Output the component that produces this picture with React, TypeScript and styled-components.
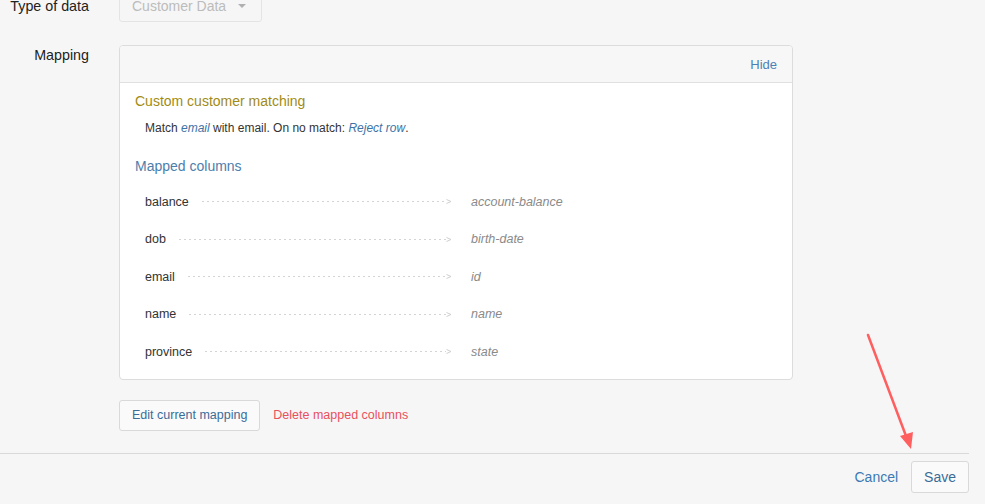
import React from "react";
import styled, { createGlobalStyle } from "styled-components";

const GlobalStyle = createGlobalStyle`
  html, body {
    margin: 0;
    padding: 0;
    background: #f6f6f6;
  }
  body {
    font-family: "Liberation Sans", Arial, sans-serif;
    color: #222;
  }
`;

const Page = styled.div`
  position: relative;
  height: 504px;
  overflow: hidden;
  padding-right: 16px;
`;

const Form = styled.div`
  display: grid;
  row-gap: 23px;
  margin-top: -10px;
`;

const FieldRow = styled.div<{ $center?: boolean }>`
  display: grid;
  grid-template-columns: 89px 674px;
  column-gap: 30px;
  align-items: ${(p) => (p.$center ? "center" : "start")};
`;

const Label = styled.div`
  text-align: right;
  font-size: 14.3px;
  line-height: 20px;
  color: #222;
`;

const Select = styled.div`
  box-sizing: border-box;
  width: 143px;
  height: 32px;
  display: flex;
  align-items: center;
  justify-content: space-between;
  padding: 0 15px 0 12px;
  border: 1px solid #e4e4e4;
  border-radius: 3px;
  font-size: 14px;
  color: #bcbcbc;
`;

const Caret = styled.span`
  width: 0;
  height: 0;
  border-left: 4px solid transparent;
  border-right: 4px solid transparent;
  border-top: 4px solid #b0b0b0;
`;

const Field = styled.div`
  display: flex;
  flex-direction: column;
`;

const Panel = styled.div`
  background: #fff;
  border: 1px solid #dcdcdc;
  border-radius: 4px;
  overflow: hidden;
`;

const PanelHeader = styled.div`
  height: 36px;
  display: flex;
  align-items: center;
  justify-content: flex-end;
  padding-right: 15px;
  background: #f7f7f7;
  border-bottom: 1px solid #e0e0e0;
`;

const LinkText = styled.span<{ $size?: number; $color?: string }>`
  font-size: ${(p) => p.$size ?? 14}px;
  color: ${(p) => p.$color ?? "#3f7ab2"};
  cursor: pointer;
`;

const PanelBody = styled.div`
  padding: 8px 0 8px 0;
`;

const SectionTitle = styled.div<{ $color: string; $gap?: number }>`
  font-size: 14px;
  line-height: 20px;
  padding-left: 15px;
  margin-top: ${(p) => p.$gap ?? 0}px;
  color: ${(p) => p.$color};
`;

const MatchLine = styled.div`
  font-size: 12px;
  line-height: 18px;
  margin-top: 8px;
  padding-left: 25px;
  color: #333;
`;

const Em = styled.em`
  color: #3d72a6;
`;

const ColumnList = styled.div`
  margin-top: 7px;
`;

const ColumnRow = styled.div`
  height: 37.5px;
  display: flex;
  align-items: center;
  padding-left: 25px;
  font-size: 12.5px;
`;

const Source = styled.div`
  width: 307px;
  display: flex;
  align-items: center;
  color: #333;
`;

const Leader = styled.div`
  flex: 1;
  margin-left: 13px;
  display: flex;
  align-items: center;
`;

const Dots = styled.span`
  flex: 1;
  height: 1px;
  background-image: repeating-linear-gradient(
    to right,
    #d4d4d4 0,
    #d4d4d4 2px,
    transparent 2px,
    transparent 5px
  );
`;

const Target = styled.div`
  margin-left: 19px;
  font-style: italic;
  color: #8a8a8a;
`;

const Actions = styled.div`
  display: flex;
  align-items: center;
  gap: 13px;
  margin-top: 20px;
`;

const Button = styled.button<{ $size?: number; $h: number }>`
  box-sizing: border-box;
  height: ${(p) => p.$h}px;
  padding: 0 12px;
  background: #fafafa;
  border: 1px solid #d9d9d9;
  border-radius: 3px;
  font-family: inherit;
  font-size: ${(p) => p.$size ?? 14}px;
  color: #3a6c98;
  cursor: pointer;
`;

const Footer = styled.div`
  margin-top: 22px;
  border-top: 1px solid #d9d9d9;
  padding-top: 7px;
  display: flex;
  justify-content: flex-end;
  align-items: center;
  gap: 13px;
`;

const Pointer = styled.svg`
  position: absolute;
  left: 860px;
  top: 328px;
  pointer-events: none;
`;

const columns: [string, string][] = [
  ["balance", "account-balance"],
  ["dob", "birth-date"],
  ["email", "id"],
  ["name", "name"],
  ["province", "state"],
];

const Chevron = () => (
  <svg width="6" height="5" viewBox="0 0 6 5">
    <path d="M0.5 0.5 L5 2.5 L0.5 4.5" fill="none" stroke="#cfcfcf" strokeWidth="1" />
  </svg>
);

export default function App() {
  return (
    <>
      <GlobalStyle />
      <Page>
        <Form>
          <FieldRow $center>
            <Label>Type of data</Label>
            <Select>
              <span>Customer Data</span>
              <Caret />
            </Select>
          </FieldRow>
          <FieldRow>
            <Label>Mapping</Label>
            <Field>
              <Panel>
                <PanelHeader>
                  <LinkText $size={13} $color="#4a82b6">Hide</LinkText>
                </PanelHeader>
                <PanelBody>
                  <SectionTitle $color="#a18b14">Custom customer matching</SectionTitle>
                  <MatchLine>
                    Match <Em>email</Em> with email. On no match: <Em>Reject row</Em>.
                  </MatchLine>
                  <SectionTitle $color="#4d7eab" $gap={19}>Mapped columns</SectionTitle>
                  <ColumnList>
                    {columns.map(([src, dst]) => (
                      <ColumnRow key={src}>
                        <Source>
                          {src}
                          <Leader>
                            <Dots />
                            <Chevron />
                          </Leader>
                        </Source>
                        <Target>{dst}</Target>
                      </ColumnRow>
                    ))}
                  </ColumnList>
                </PanelBody>
              </Panel>
              <Actions>
                <Button $h={31} $size={12.5}>Edit current mapping</Button>
                <LinkText $size={12.5} $color="#e9505d">Delete mapped columns</LinkText>
              </Actions>
            </Field>
          </FieldRow>
        </Form>
        <Footer>
          <LinkText $color="#3b7ab3">Cancel</LinkText>
          <Button $h={32}>Save</Button>
        </Footer>
        <Pointer width="60" height="130" viewBox="0 0 60 130">
          <line x1="8" y1="7" x2="46" y2="108" stroke="#ff5f5f" strokeWidth="2.5" strokeLinecap="round" />
          <polygon points="40,108 53,104 51,121" fill="#ff5f5f" />
        </Pointer>
      </Page>
    </>
  );
}
